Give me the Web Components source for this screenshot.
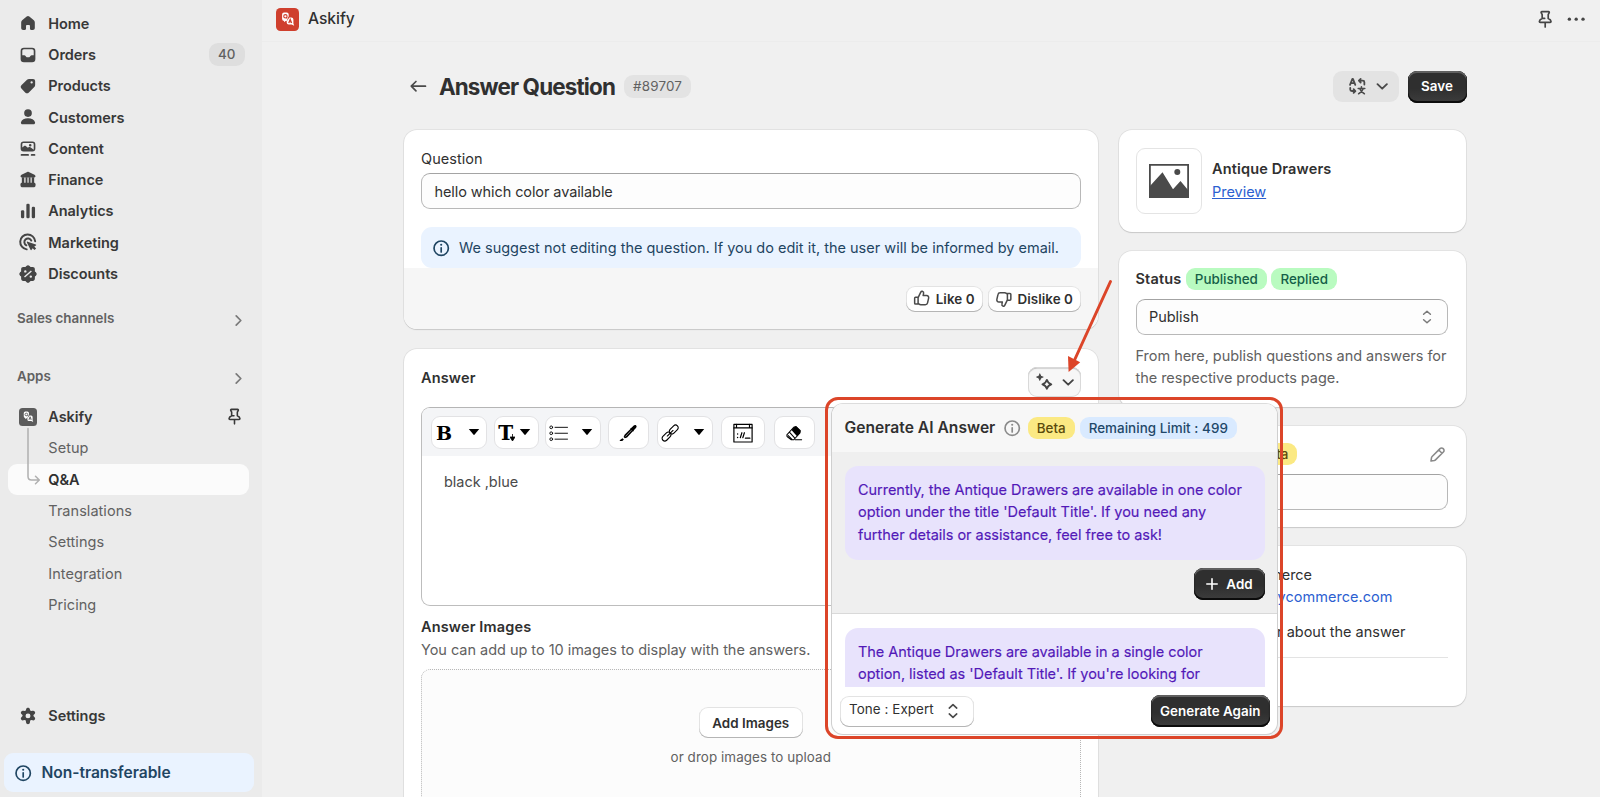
<!DOCTYPE html>
<html lang="en">
<head>
<meta charset="utf-8">
<title>Askify</title>
<style>
html,body{margin:0;height:100%;overflow:hidden}
body{font:400 14.5px/22.4px Inter,"Liberation Sans",sans-serif;color:#303030;background:#f0f0f0;letter-spacing:-.03px}
</style>
</head>
<body>
<app-frame></app-frame>
<script>
const define=(name,html)=>customElements.define(name,class extends HTMLElement{
  constructor(){super();this.attachShadow({mode:"open"});}
  connectedCallback(){
    const t=document.createElement("template");
    t.innerHTML=typeof html==="function"?html(this):html;
    this.shadowRoot.replaceChildren(t.content.cloneNode(true));
  }
});

/* 20-unit icon set; fill uses currentColor, .s marks stroked shapes */
const ICONS={
home:'<path d="M8.8 4.1a1.9 1.9 0 0 1 2.4 0l4.1 3.5c.6.5.9 1.2.9 2v4.9c0 1-.8 1.8-1.8 1.8h-1.600c-.6 0-1-.4-1-1v-2.5c0-.6-.4-1-1-1H9.200c-.6 0-1 .4-1 1v2.5c0 .6-.4 1-1 1H5.600c-1 0-1.800-.8-1.800-1.800V9.600c0-.8.3-1.500.9-2z"/>',
orders:'<path fill-rule="evenodd" d="M6.300 3.300h7.400a3 3 0 0 1 3 3v7.400a3 3 0 0 1-3 3H6.300a3 3 0 0 1-3-3V6.300a3 3 0 0 1 3-3zm0 1.500c-.8 0-1.500.7-1.500 1.500v3.900h1.800c.5 0 .9.2 1.200.6l.5.7c.3.4.7.6 1.200.6h1c.5 0 .9-.2 1.200-.6l.5-.7c.3-.4.7-.6 1.200-.6h1.800V6.300c0-.8-.7-1.500-1.500-1.500z"/>',
tag:'<path fill-rule="evenodd" d="M11 3.600h3.600a1.900 1.900 0 0 1 1.900 1.900V9c0 .7-.3 1.400-.8 1.900l-4.900 4.900a2.400 2.400 0 0 1-3.400 0l-3.200-3.200a2.400 2.400 0 0 1 0-3.400L9.100 4.400c.5-.5 1.200-.8 1.900-.8zm2.300 4.200a1 1 0 1 0 0-2.100 1 1 0 0 0 0 2.100z"/>',
person:'<circle cx="10" cy="6.400" r="3.500"/><path d="M10 11.200c3.300 0 5.700 1.400 6.400 3.500.3 1-.5 1.900-1.500 1.900H5.100c-1 0-1.800-.9-1.500-1.900.7-2.100 3.100-3.500 6.400-3.500z"/>',
content:'<path fill-rule="evenodd" d="M6 3.100h8a2.700 2.700 0 0 1 2.700 2.700v3.800a2.700 2.700 0 0 1-2.700 2.700H6a2.700 2.700 0 0 1-2.700-2.700V5.800A2.700 2.700 0 0 1 6 3.100zM6 4.600c-.7 0-1.200.5-1.200 1.200v2.800l1.400-1.200c.6-.5 1.400-.5 2 0l1.700 1.500.6-.5c.5-.4 1.200-.4 1.700 0l3 2.200V5.800c0-.7-.5-1.200-1.200-1.200zm6 3.200a1.200 1.200 0 1 0 0-2.400 1.200 1.200 0 0 0 0 2.400z"/><rect x="3.300" y="14.500" width="7.600" height="1.700" rx=".85"/><rect x="12.500" y="14.500" width="4.200" height="1.700" rx=".85"/>',
bank:'<path d="M9.300 2.700c.4-.2 1-.2 1.400 0l5.200 2.600c.6.300.9.800.9 1.400 0 .6-.5 1.100-1.100 1.100H4.300c-.6 0-1.100-.5-1.100-1.100 0-.6.300-1.100.9-1.400z"/><path d="M4.400 7.500h2.200v5.500H4.400zM7.800 7.500h1.700v5.500H7.800zM10.600 7.500h1.700v5.500h-1.700zM13.400 7.500h2.200v5.500h-2.200z"/><rect x="3.200" y="12.600" width="13.600" height="3.900" rx="1.200"/>',
bars:'<rect x="3.600" y="9.300" width="3" height="7.400" rx="1.200"/><rect x="8.500" y="3.300" width="3" height="13.400" rx="1.200"/><rect x="13.400" y="6.100" width="3" height="10.600" rx="1.200"/>',
target:'<path class="s" stroke-width="1.800" d="M8.800 16.700a6.800 6.800 0 1 1 7.700-7.400"/><path class="s" stroke-width="1.800" d="M8.500 13A3.300 3.300 0 1 1 13 8.700"/><path d="M9.700 9.700l7.400 2.500c.5.200.5.800.1 1l-1.500.9 1.700 1.700-1.500 1.500-1.700-1.700-.9 1.500c-.2.500-.9.400-1-.1L9 10.400c-.2-.4.300-.9.700-.7z"/>',
discount:'<path fill-rule="evenodd" transform="translate(-.6 -.6) scale(1.060)" d="M8.600 3.200a1.900 1.900 0 0 1 2.800 0l.8.900h1.900c1 0 1.800.8 1.800 1.800v1.900l.9.800a1.900 1.900 0 0 1 0 2.800l-.9.800v1.900c0 1-.8 1.800-1.800 1.800h-1.900l-.8.900a1.900 1.900 0 0 1-2.800 0l-.8-.9H5.900c-1 0-1.800-.8-1.800-1.800v-1.900l-.9-.8a1.900 1.900 0 0 1 0-2.800l.9-.8V5.900c0-1 .8-1.800 1.800-1.800h1.900zM7.700 6.700a1 1 0 1 0 0 2.100 1 1 0 0 0 0-2.100zm4.700 4.500a1 1 0 1 0 0 2.100 1 1 0 0 0 0-2.100zm-5 1.900 5.900-5.300-.8-.9-5.900 5.300z"/>',
gear:'<path fill-rule="evenodd" d="M8.500 3.600c.1-.7.700-1.200 1.500-1.200s1.400.5 1.500 1.200l.3 1.200.7.400 1.200-.3c.7-.2 1.400.1 1.800.8s.3 1.400-.2 1.900l-.9 1v.8l.9.9c.5.500.6 1.300.2 1.900-.4.700-1.100 1-1.800.8l-1.200-.3-.7.400-.3 1.900c-.1.700-.7 1.200-1.500 1.200s-1.400-.5-1.500-1.200l-.3-1.900-.7-.4-1.200.3c-.7.200-1.400-.1-1.800-.8-.4-.6-.3-1.400.2-1.900l.9-.9v-.8l-.9-1c-.5-.5-.6-1.200-.2-1.900s1.100-1 1.800-.8l1.200.3.700-.4zM10 7.300a2 2 0 1 0 0 4 2 2 0 0 0 0-4z" transform="translate(-1.300 -.1) scale(1.130 1.080)"/>',
chev:'<path class="s" stroke-width="1.500" d="M8 6l4 4-4 4"/>',
down:'<path class="s" stroke-width="1.700" d="M5.800 8.200L10 12.200l4.200-4"/>',
updown:'<path class="s" stroke-width="1.500" d="M6.600 7.300L10 4.200l3.400 3.100M6.600 12.700L10 15.800l3.400-3.100"/>',
pin:'<path class="s" stroke-width="1.500" d="M7 3.200h6c.5 0 .8.500.6.900l-.9 1.800v3.400c1.500.6 2.400 1.500 2.500 2.700 0 .5-.4.800-.8.800H5.600c-.4 0-.8-.3-.8-.8.1-1.200 1-2.100 2.500-2.700V5.900l-.9-1.800c-.2-.4.100-.9.6-.9zM10 13v4M8 9.300h1.500"/>',
dots:'<circle cx="3.900" cy="10" r="1.500"/><circle cx="10" cy="10" r="1.500"/><circle cx="16.100" cy="10" r="1.500"/>',
back:'<path class="s" stroke-width="1.500" d="M16.500 10H4M8 5.800L3.800 10 8 14.200"/>',
info:'<circle class="s" cx="10" cy="10" r="6.400" stroke-width="1.500"/><path class="s" stroke-width="1.500" d="M10 9.700v3.600"/><circle cx="10" cy="6.900" r=".95"/>',
translate:'<g class="s" stroke-width="1.600"><path d="M3.600 8.800L5.700 3.400h.5L8.300 8.800M4.300 7.200h3.300"/><path d="M11.800 5.100h3.200q1.400 0 1.400 1.400v2M13.100 3.500l-1.600 1.600 1.600 1.600"/><path d="M3.800 11.500v1.400q0 1.400 1.400 1.400h3M6.800 12.700l1.600 1.600-1.600 1.600"/><path stroke-width="1.400" d="M10.900 12h5.900M13.800 10.600v1.200M11.300 16.800q3-1.400 4-4.600M16.400 16.800q-3-1.400-4-4.600"/></g>',
sparkle:'<path class="s" stroke-width="1.600" d="M11.700 7.300c.6 2.200 1.800 3.400 4 4-2.200.6-3.400 1.800-4 4-.6-2.200-1.800-3.400-4-4 2.200-.6 3.400-1.800 4-4z" transform="translate(-.2 .6)"/><path d="M5.200 2.900l.8 1.700 1.700.8-1.700.8-.8 1.700-.8-1.700-1.700-.8 1.700-.8z" stroke="currentColor"/>',
up:'<path class="s" stroke-width="1.400" d="M6.600 9l2.500-5.200c.3-.6 1-.9 1.600-.7.8.3 1.200 1.100 1 1.900L11.300 7h3.200c1.300 0 2.200 1.200 1.900 2.400l-1 4.400c-.2 1-1.100 1.700-2.100 1.700H9.200c-.7 0-1.400-.3-2-.8l-.6-.5zM6.600 8.700H4.200c-.5 0-.8.3-.8.800v4.600c0 .500.3.800.8.800h2.400z"/>',
down_thumb:'<path class="s" stroke-width="1.400" d="M13.400 11l-2.500 5.200c-.3.600-1 .9-1.600.7-.8-.3-1.200-1.100-1-1.900l.4-2H5.500c-1.300 0-2.200-1.200-1.900-2.400l1-4.400c.2-1 1.100-1.700 2.100-1.700h4.100c.7 0 1.400.3 2 .8l.6.500zM13.400 11.300h2.400c.5 0 .8-.3.8-.8V5.900c0-.5-.3-.8-.8-.8h-2.400z"/>',
pencil:'<path class="s" stroke-width="1.500" d="M3.800 16.200l.5-3.200c.1-.4.300-.8.600-1.100l7.500-7.500a2.100 2.100 0 0 1 3 0l.2.200a2.100 2.100 0 0 1 0 3l-7.500 7.500c-.3.300-.7.500-1.100.6zM11.200 5.700l3.100 3.100"/>',
plus:'<path class="s" stroke-width="1.600" d="M10 4.800v10.400M4.800 10h10.400"/>',
caret:'<path d="M4.800 7h10.400l-5.200 6.200z"/>',
list:'<g class="s" stroke-width="1"><circle cx="2.400" cy="3.600" r="1.500"/><circle cx="2.400" cy="10" r="1.500"/><circle cx="2.400" cy="16.400" r="1.500"/><path d="M6.500 3.600H20M6.500 10H20M6.500 16.400H20"/></g>',
brush:'<path d="M18.600 1.500c.8.900.5 2-.5 3l-2.100 2.300.1.500-.8.800-.6-.1-6 6.500-2.400.9L5 14l1-2.300 6.300-6.300-.1-.6.800-.8.600.1 2-2.200c.9-1 2.100-1.300 3-.4zM3.700 15.500l1.600 1.200L3.500 18.500H.9l-.1-1z"/><path stroke="#fff" stroke-width=".6" d="M7 13.500l6.500-6.800"/>',
link:'<g class="s" stroke-width="1.200"><rect x="-5.600" y="-2.900" width="11.200" height="5.800" rx="2.900" transform="translate(6 13.600) rotate(-45)"/><rect x="-5.600" y="-2.900" width="11.200" height="5.800" rx="2.900" transform="translate(13.800 6) rotate(-45)"/><path d="M6.800 13L13 7"/></g>',
code:'<g class="s" stroke-width="1.200" stroke-linejoin="miter"><rect x=".9" y="1.400" width="18.200" height="17.600"/><path d="M.9 4.900h18.200M3.500 1.400v3.500M16.500 1.400v3.500"/><path d="M7.300 14.700l1.600-5M9.800 14.700l1.600-5M12.400 15.200h4.500"/></g><circle cx="4.600" cy="11" r=".7"/><circle cx="4.600" cy="14.500" r=".7"/>',
eraser:'<path class="s" stroke-width="1.100" d="M2 11.800L9.400 3.500l2.500-.8 4.600 4.500-.3 2.300-6.700 7.500H6.500L2.200 13.500zM5 9l5.600 6.200M3.500 12.500l4 4M11 17h7"/><path d="M7 6.600l3-3.400 2.400-.5 4.300 4.500-.4 2.500-3.300 3.500z"/>'
};
define("ui-icon",el=>`<style>:host{display:inline-block;flex:none;width:22.4px;height:22.4px}
svg{display:block;width:100%;height:100%;fill:currentColor;overflow:visible}
.s{fill:none;stroke:currentColor;stroke-linecap:round;stroke-linejoin:round}</style>
<svg viewBox="0 0 20 20">${ICONS[el.getAttribute("name")]}</svg>`);

define("app-logo",`<style>:host{display:block;flex:none;width:23px;height:23px}svg{display:block;width:100%;height:100%}
.b{fill:var(--logo,#cf3f2d)}.l{fill:none;stroke:var(--logo,#cf3f2d);stroke-width:1.100}</style>
<svg viewBox="0 0 23 23"><rect class="b" width="23" height="23" rx="4.500"/>
<path fill="#fff" d="M8 4.500h2.700a2 2 0 0 1 2 2V11a2 2 0 0 1-2 2H9.600l-1.500 1.300V13a2.200 2.200 0 0 1-2-2V6.500a2 2 0 0 1 1.900-2z"/>
<path class="b" d="M12.400 8.800h5.300v6H10z"/>
<path fill="#fff" d="M13.400 9.600h2a2 2 0 0 1 2 2v4l.8 2.200-2.600-1.200h-2.900a2 2 0 0 1-2-2v-1.400z"/>
<circle class="l" cx="9.400" cy="8.300" r="1.700"/><path class="l" d="M10.100 9.200l1 1.200M12.700 15l1.500-3.800 1.500 3.800M13.200 13.900h2"/></svg>`);

define("nav-item",el=>`<style>
:host{display:flex;align-items:center;height:31.3px;margin:0 13px 0 8px;padding:0 4px 0 9px;box-sizing:border-box;border-radius:9px;font-weight:600;color:#383838;letter-spacing:-.06px}
:host([sub]){font-weight:400;color:#616161;padding-left:40.300px;letter-spacing:.04px}
:host([active]){background:#fbfbfb;font-weight:600;color:#303030;letter-spacing:-.06px}
ui-icon,app-logo{margin-right:9.300px;color:#454545}
ui-icon{width:22px;height:22px}
app-logo{width:18px;height:18px;margin:0 11.300px 0 2px;--logo:#5c5c5c}
span{flex:1;padding-top:1px}
</style>${el.hasAttribute("icon")?`<ui-icon name="${el.getAttribute("icon")}"></ui-icon>`:""}${el.hasAttribute("logo")?"<app-logo></app-logo>":""}<span><slot></slot></span><slot name="end"></slot>`);

define("nav-heading",`<style>:host{display:flex;align-items:center;justify-content:space-between;height:24px;padding:0 12px 0 17px;font-size:13.4px;font-weight:600;color:#616161;letter-spacing:0}
ui-icon{width:23px;height:23px;color:#7a7a7a;margin-top:4px}</style><slot></slot><ui-icon name="chev"></ui-icon>`);

define("ui-badge",`<style>:host{display:inline-flex;align-items:center;height:22.4px;padding:0 9px;border-radius:9px;font-size:13.4px;line-height:22.4px;font-weight:500;letter-spacing:0;white-space:nowrap;background:#e3e3e3;color:#616161;box-sizing:border-box}
:host([tone=green]){background:#b9fbc0;color:#155f48}
:host([tone=yellow]){background:#fbe983;color:#5a4a0c}
:host([tone=blue]){background:#d9eaff;color:#1f4869;letter-spacing:.05px}</style><slot></slot>`);

define("ui-button",`<style>:host{display:inline-flex;align-items:center;justify-content:center;box-sizing:border-box;height:31px;padding:0 13.500px;border-radius:9px;font-size:13.4px;font-weight:600;color:#303030;background:#fff;white-space:nowrap;letter-spacing:.02px;
box-shadow:inset 0 -1px 0 #b5b5b5,inset 0 0 0 1px #e3e3e3}
:host([primary]){color:#fff;background:linear-gradient(#2f2f2f 55%,#3d3d3d);box-shadow:inset 0 -1.500px 0 .5px #0c0c0c,inset 0 1.500px 0 .5px #606060,inset 0 0 0 1.200px #2a2a2a}</style><slot></slot>`);

define("ui-field",`<style>:host{display:flex;align-items:center;justify-content:space-between;box-sizing:border-box;height:36px;padding:1px 11px 0 12.500px;border:1px solid #b8b8b8;border-top-color:#a3a3a3;border-radius:9px;background:#fdfdfd}</style><slot></slot>`);

define("ui-card",`<style>:host{display:block;box-sizing:border-box;border-radius:13px;background:#fff;padding:17.500px 17.500px 17.500px 17px;overflow:hidden;box-shadow:0 1px 1px #c9c9c9,0 0 0 .8px #dedede}
:host([flush]){padding:0}</style><slot></slot>`);

define("side-nav",`<style>
:host{display:flex;flex:none;flex-direction:column;width:262px;box-sizing:border-box;background:#ebebeb;height:100%;padding-top:7.700px}
nav{position:relative}
.gap1{margin-top:17.300px}.gap2{margin:34px 0 12.600px}
.tree{position:absolute;left:26.500px;top:20px;width:14px;height:58px;overflow:visible;fill:none;stroke:#b0b0b0;stroke-width:1.500;stroke-linecap:round;stroke-linejoin:round}
ui-badge.count{background:#dedede;padding:0 9.500px;margin-right:0}
.spacer{flex:1}
.banner{display:flex;align-items:center;gap:7px;height:39px;margin:21.500px 8px 5px 4px;padding:1px 0 0 8px;box-sizing:border-box;background:#eaf3ff;border-radius:9px;color:#1f4562;font-size:15.600px;font-weight:600}
</style>
<nav><nav-item icon="home">Home</nav-item>
<nav-item icon="orders">Orders<ui-badge slot="end" class="count">40</ui-badge></nav-item>
<nav-item icon="tag">Products</nav-item><nav-item icon="person">Customers</nav-item><nav-item icon="content">Content</nav-item>
<nav-item icon="bank">Finance</nav-item><nav-item icon="bars">Analytics</nav-item><nav-item icon="target">Marketing</nav-item><nav-item icon="discount">Discounts</nav-item></nav>
<nav-heading class="gap1">Sales channels</nav-heading>
<nav-heading class="gap2">Apps</nav-heading>
<nav><nav-item logo>Askify<ui-icon slot="end" name="pin" style="width:21px;height:21px"></ui-icon></nav-item>
<nav-item sub>Setup</nav-item><nav-item sub active>Q&amp;A</nav-item><nav-item sub>Translations</nav-item><nav-item sub>Settings</nav-item><nav-item sub>Integration</nav-item><nav-item sub>Pricing</nav-item>
<svg class="tree" viewBox="0 0 14 58"><path d="M1 7.500V55.500q0 3.500 3.500 3.500H12M8.500 55.300l3.800 3.700-3.800 3.700"/></svg></nav>
<div class="spacer"></div>
<nav-item icon="gear">Settings</nav-item>
<div class="banner"><ui-icon name="info"></ui-icon>Non-transferable</div>`);

define("top-bar",`<style>:host{display:flex;flex:none;align-items:center;height:42px;padding:0 13px 3px 14px;box-sizing:border-box;border-bottom:1px solid #ececec;font-size:15.600px;font-weight:500}
span{flex:1;margin-left:9px}ui-icon{color:#454545;margin-left:8.500px}</style><app-logo></app-logo><span>Askify</span><ui-icon name="pin"></ui-icon><ui-icon name="dots"></ui-icon>`);

define("page-title",`<style>:host{display:flex;align-items:center;height:33px}
h1{margin:0 9px 0 9.500px;font-size:22.400px;font-weight:700;letter-spacing:-.85px;line-height:32px}
ui-icon{color:#4a4a4a}
.sp{flex:1}
ui-badge{font-weight:400;letter-spacing:.2px;font-size:13.400px}
.lang{display:flex;align-items:center;justify-content:space-between;width:66.500px;height:31px;border-radius:9px;background:#e3e3e3;padding:0 6px 0 13px;box-sizing:border-box;margin-right:8.500px}
</style><ui-icon name="back"></ui-icon><h1>Answer Question</h1><ui-badge>#89707</ui-badge><div class="sp"></div>
<div class="lang"><ui-icon name="translate"></ui-icon><ui-icon name="down"></ui-icon></div><ui-button primary style="height:32px;width:59px;padding:0">Save</ui-button>`);

define("question-card",`<style>:host{display:block}
.body{padding:17.500px 17px 0 17px}
ui-field{margin:3.500px 0 18px;letter-spacing:-.09px}
.note{display:flex;align-items:center;gap:7px;height:41px;border-radius:11px;background:#eaf3ff;color:#1f4562;padding-left:8.500px;letter-spacing:0}
.foot{display:flex;justify-content:flex-end;gap:5.500px;height:61px;padding:17.500px 17px 0;box-sizing:border-box;background:#f6f6f6}
ui-button{height:26px;padding:0 8px 0 5px;border-radius:9px;letter-spacing:.05px}
ui-button ui-icon{color:#4a4a4a;width:21.500px;height:21.500px;margin-right:3px}
</style><ui-card flush><div class="body"><div style="letter-spacing:.05px">Question</div><ui-field>hello which color available</ui-field>
<div class="note"><ui-icon name="info"></ui-icon>We suggest not editing the question. If you do edit it, the user will be informed by email.</div></div>
<div class="foot"><ui-button><ui-icon name="up"></ui-icon>Like 0</ui-button><ui-button><ui-icon name="down_thumb"></ui-icon>Dislike 0</ui-button></div></ui-card>`);

define("tool-button",`<style>:host{display:flex;flex:none;align-items:center;justify-content:center;box-sizing:border-box;height:33px;border:1px solid #e2e2e4;border-radius:9px;background:#fff;color:#000}</style><slot></slot>`);

define("rich-editor",`<style>:host{display:flex;flex-direction:column;box-sizing:border-box;height:199px;border:1px solid #bdbdbd;border-top:1.500px solid #b5b5b5;border-radius:9px;overflow:hidden;background:#fff}
.bar{display:flex;height:48px;padding:8px 0 0 9.200px;box-sizing:border-box;background:#f4f5f7}
tool-button{margin-right:7px}
b{font:700 19px/20px "DejaVu Serif",serif}
ui-icon{width:18.500px;height:18.500px}
.c{width:20px;height:20px;margin-top:-2px}
.text{padding:15px 22px;color:#4a4a4a}
</style><div class="bar">
<tool-button style="width:55.500px"><b style="margin:0 12px 0 2px">B</b><ui-icon class="c" name="caret"></ui-icon></tool-button>
<tool-button style="width:45px;margin-right:6.500px"><b style="font-size:20px;margin-left:1px">T</b><svg width="5" height="7" viewBox="0 0 5 7" style="margin:10px 0 0 -3px"><path d="M2.500 0v4M0 3h5L2.500 7z" stroke="#000" stroke-width=".8"/></svg><ui-icon class="c" name="caret"></ui-icon></tool-button>
<tool-button style="width:56px"><ui-icon name="list" style="margin-right:9px"></ui-icon><ui-icon class="c" name="caret"></ui-icon></tool-button>
<tool-button style="width:41px;margin-right:8px"><ui-icon name="brush"></ui-icon></tool-button>
<tool-button style="width:56px;margin-right:8px"><ui-icon name="link" style="margin-right:10px"></ui-icon><ui-icon class="c" name="caret"></ui-icon></tool-button>
<tool-button style="width:43.500px;margin-right:9px"><ui-icon name="code" style="width:20px;height:20px"></ui-icon></tool-button>
<tool-button style="width:41px"><ui-icon name="eraser"></ui-icon></tool-button>
</div><div class="text">black ,blue</div>`);

define("answer-card",`<style>:host{display:block}
ui-card{height:520px}
.head{display:flex;justify-content:space-between;align-items:flex-start;height:40.500px;margin-right:-.5px}
strong{font-weight:600;letter-spacing:.15px;display:block}
.ai{display:flex;align-items:center;justify-content:space-between;width:53.500px;height:30.500px;padding:1px 2px 0 6px;box-sizing:border-box;border-radius:9px;background:#f7f7f7;color:#454545;box-shadow:inset 0 0 0 1px #d9d9d9,inset 0 1.500px 1px #b5b5b5}
.sub{color:#616161}
.drop{display:flex;flex-direction:column;align-items:center;margin-top:7.500px;height:200px;border:1px dotted #b8b8b8;border-radius:9px;background:#fcfcfc;padding-top:37.500px;color:#616161;font-size:13.400px;letter-spacing:.08px;gap:7.500px}
</style><ui-card><div class="head"><strong>Answer</strong><div class="ai"><ui-icon name="sparkle"></ui-icon><ui-icon name="down"></ui-icon></div></div>
<rich-editor></rich-editor>
<strong style="margin-top:10px">Answer Images</strong><div class="sub">You can add up to 10 images to display with the answers.</div>
<div class="drop"><ui-button>Add Images</ui-button><span>or drop images to upload</span></div></ui-card>`);

define("side-column",`<style>:host{display:flex;flex-direction:column;gap:19px;width:347px}
strong{font-weight:600;letter-spacing:.15px}
.prod{display:flex;align-items:center;gap:10.500px;height:101.500px;padding:0 17px}
.thumb{display:grid;place-items:center;width:66px;height:66px;box-sizing:border-box;border:1px solid #e4e4e4;border-radius:9px}
a{color:#2c5fd1;text-decoration:underline;display:block}
.row{display:flex;align-items:center;gap:4.500px}
.help{color:#616161;margin:10px -4px 0 0;letter-spacing:-.04px}
ui-field{margin-top:8.500px}
.r{text-align:right;white-space:nowrap}
</style>
<ui-card flush><div class="prod"><div class="thumb"><svg width="40" height="34" viewBox="0 0 40 34"><path fill="none" stroke="#4a4a4a" stroke-width="1.800" d="M.9.9h38.200v32.200H.9z"/><path fill="#4a4a4a" d="M1 22L13.500 8.200 24 25.300l7.500-8.300L39 26v7H1z"/><circle cx="28.300" cy="8" r="3" fill="#4a4a4a"/></svg></div><div><strong>Antique Drawers</strong><a>Preview</a></div></div></ui-card>
<ui-card style="height:156px"><div class="row"><strong>Status</strong><ui-badge tone="green">Published</ui-badge><ui-badge tone="green">Replied</ui-badge></div>
<ui-field>Publish<ui-icon name="updown" style="width:20px;height:20px;color:#7a7a7a;margin-right:-1px"></ui-icon></ui-field><div class="help">From here, publish questions and answers for<br>the respective products page.</div></ui-card>
<ui-card style="height:101.500px"><div class="row" style="justify-content:space-between"><ui-badge tone="yellow" style="margin-left:115px">Beta</ui-badge><ui-icon name="pencil" style="width:21px;height:21px;color:#8a8a8a"></ui-icon></div><ui-field></ui-field></ui-card>
<ui-card style="height:160px"><div class="r" style="width:176.500px">merce</div><div class="r" style="width:257px;color:#2c5fd1;letter-spacing:.03px">ycommerce.com</div>
<div class="r" style="width:270px;margin-top:13px;letter-spacing:0">r about the answer</div><div style="height:1px;background:#e3e3e3;margin-top:13px"></div></ui-card>`);

define("answer-option",`<style>:host{display:block;box-sizing:border-box;padding:13.500px 12.500px 0}
p{margin:0;padding:13.500px 13.500px;background:#e8e3fc;border-radius:13px;color:#5219b8;-webkit-text-stroke:.15px #5219b8;white-space:nowrap;letter-spacing:-.035px}
.act{display:flex;justify-content:flex-end;margin-top:8.500px}</style><p><slot></slot></p><div class="act"><slot name="action"></slot></div>`);

define("ai-popover",`<style>
:host{display:block;box-sizing:border-box;border:3px solid #dc4529;border-radius:13px;padding:3px 2px 1px 3px}
.pop{display:flex;flex-direction:column;height:100%;box-sizing:border-box;border:1px solid #cfcfcf;border-top-color:#dcdcdc;border-radius:12px;background:#fff;overflow:hidden}
header{display:flex;align-items:center;height:48px;padding-left:12.500px;background:#f7f7f7;flex:none}
header strong{font-size:15.600px;font-weight:600;letter-spacing:.02px}
header ui-icon{color:#8a8a8a;margin:0 4.500px 0 5.500px}
.list{flex:1;overflow:hidden}
.first{background:#efefef;height:162px;border-bottom:1px solid #d9d9d9}
footer{display:flex;align-items:center;justify-content:space-between;height:47.500px;flex:none;padding:2px 7.500px 0 8px;box-sizing:border-box}
</style><div class="pop"><header><strong>Generate AI Answer</strong><ui-icon name="info"></ui-icon><ui-badge tone="yellow" style="margin-right:5px">Beta</ui-badge><ui-badge tone="blue">Remaining Limit : 499</ui-badge></header>
<div class="list"><answer-option class="first">Currently, the Antique Drawers are available in one color<br>option under the title 'Default Title'. If you need any<br>further details or assistance, feel free to ask!<ui-button slot="action" primary style="height:32px;width:71px;padding:0 3px 0 0"><ui-icon name="plus" style="width:20px;height:20px;margin-right:4px"></ui-icon>Add</ui-button></answer-option>
<answer-option>The Antique Drawers are available in a single color<br>option, listed as 'Default Title'. If you're looking for<br>&nbsp;</answer-option></div>
<footer><ui-button style="width:133.500px;padding:0;justify-content:flex-start;padding-left:9px"><span style="margin:-4px 8.500px 0 0;font-weight:400;letter-spacing:.08px">Tone : Expert</span><ui-icon name="updown" style="width:22px;height:22px;color:#4a4a4a"></ui-icon></ui-button>
<ui-button primary style="height:32px;width:118.500px;padding:0">Generate Again</ui-button></footer></div>`);

define("callout-arrow",`<style>:host{display:block}svg{display:block;width:100%;height:100%;overflow:visible}</style>
<svg viewBox="0 0 46 94"><path d="M43.500 2.500L8 80" fill="none" stroke="#dc4529" stroke-width="3" stroke-linecap="round"/><path fill="#dc4529" d="M1 77l12.200 6.200L1.600 93z"/></svg>`);

define("app-frame",`<style>
:host{display:flex;height:100vh;position:relative;overflow:hidden}
.main{flex:1;display:flex;flex-direction:column;min-width:0}
.page{width:1061.500px;margin:28px 0 0 142px}
.cols{display:flex;justify-content:space-between;margin-top:27px}
.left{width:694px;display:flex;flex-direction:column;gap:20px}
page-title{margin:0 -1px 0 3px}
ai-popover{position:absolute;left:825px;top:397px;width:458px;height:342px}
callout-arrow{position:absolute;left:1067px;top:279px;width:46px;height:94px}
</style><side-nav></side-nav><div class="main"><top-bar></top-bar><div class="page"><page-title></page-title>
<div class="cols"><div class="left"><question-card></question-card><answer-card></answer-card></div><side-column></side-column></div></div></div>
<ai-popover></ai-popover><callout-arrow></callout-arrow>`);
</script>
</body>
</html>
